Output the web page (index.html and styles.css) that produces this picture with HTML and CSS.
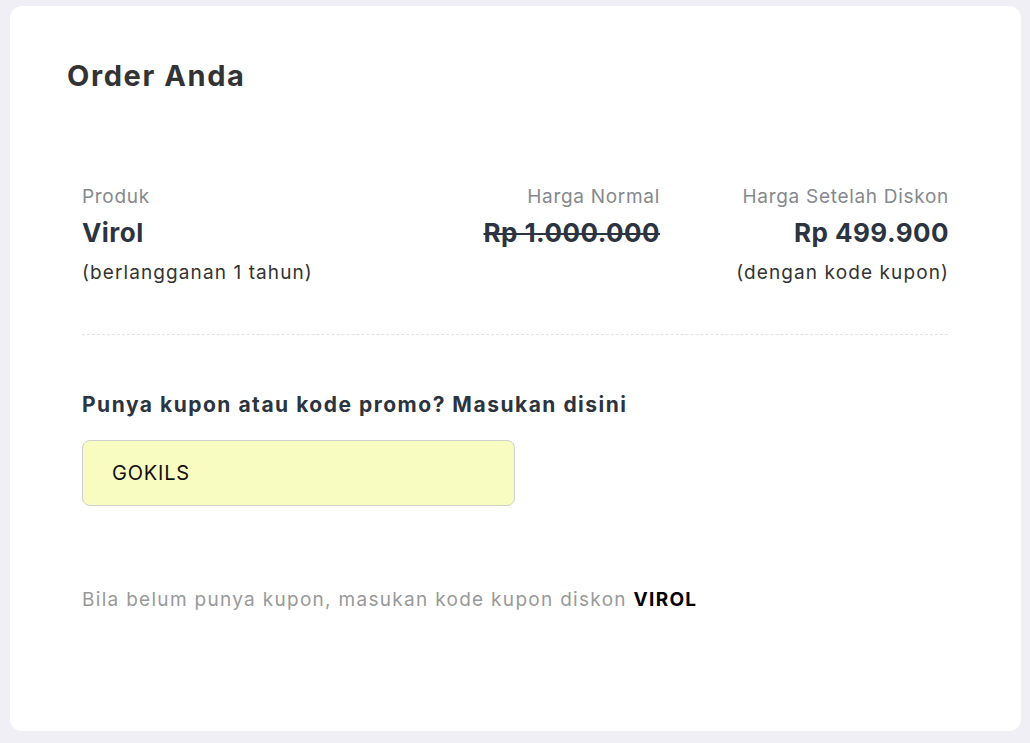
FILE: index.html
```html
<!DOCTYPE html>
<html lang="en">
<head>
    <meta charset="UTF-8">
    <meta name="viewport" content="width=device-width, initial-scale=1.0">
    <title>Order Anda</title>
    <link rel="stylesheet" href="styles.css">
</head>
<body>
    <div class="card">
        <h1>Order Anda</h1>
        <div class="order-table">
            <div class="col">
                <div class="label">Produk</div>
                <div class="value">Virol</div>
                <div class="note">(berlangganan 1 tahun)</div>
            </div>
            <div class="col right">
                <div class="label">Harga Normal</div>
                <div class="value strike">Rp 1.000.000</div>
            </div>
            <div class="col right">
                <div class="label">Harga Setelah Diskon</div>
                <div class="value">Rp 499.900</div>
                <div class="note">(dengan kode kupon)</div>
            </div>
        </div>
        <div class="divider"></div>
        <div class="coupon">
            <label for="coupon">Punya kupon atau kode promo? Masukan disini</label>
            <input type="text" id="coupon" value="GOKILS">
        </div>
        <p class="hint">Bila belum punya kupon, masukan kode kupon diskon <b>VIROL</b></p>
    </div>
</body>
</html>
```

FILE: styles.css
```css
body {
    font-family: Inter, "Open Sans", sans-serif;
    margin: 0;
    padding: 6px 9px 12px 10px;
    background: #efeff5;
}
.card {
    background: #fff;
    border-radius: 12px;
    height: 725px;
    box-sizing: border-box;
    padding: 50px 73px 0 72px;
}
h1 {
    margin: 0 0 0 -15px;
    font-size: 29px;
    font-weight: 700;
    letter-spacing: 1.6px;
    color: #333;
    line-height: 40px;
}
.order-table {
    display: grid;
    grid-template-columns: 1fr 220px 289px;
    margin-top: 89px;
}
.col.right {
    text-align: right;
    margin-right: -1px;
}
.label {
    font-size: 19px;
    letter-spacing: 0.7px;
    color: #85898e;
    line-height: 24px;
}
.value {
    font-size: 26px;
    font-weight: 700;
    letter-spacing: 0.45px;
    color: #2b3440;
    line-height: 38px;
    margin-top: 5px;
}
.strike {
    text-decoration: line-through;
    text-decoration-thickness: 2px;
}
.note {
    font-size: 19px;
    letter-spacing: 1.1px;
    color: #333;
    line-height: 30px;
    margin-top: 6px;
}
.divider {
    border-top: 1px dashed #e2e2e2;
    margin-top: 46px;
}
.coupon label {
    display: block;
    margin-top: 55px;
    font-size: 21px;
    font-weight: 700;
    letter-spacing: 1.5px;
    color: #2b3440;
    line-height: 30px;
}
.coupon input {
    display: block;
    margin-top: 20px;
    width: 433px;
    height: 66px;
    box-sizing: border-box;
    padding: 0 29px;
    font-family: inherit;
    font-size: 20px;
    letter-spacing: 0.8px;
    color: #111;
    background: #f9fcc1;
    border: 1px solid #cfcfcf;
    border-radius: 8px;
}
.hint {
    margin: 82px 0 0;
    font-size: 19px;
    letter-spacing: 1.3px;
    color: #999;
}
.hint b {
    color: #000;
}
```
